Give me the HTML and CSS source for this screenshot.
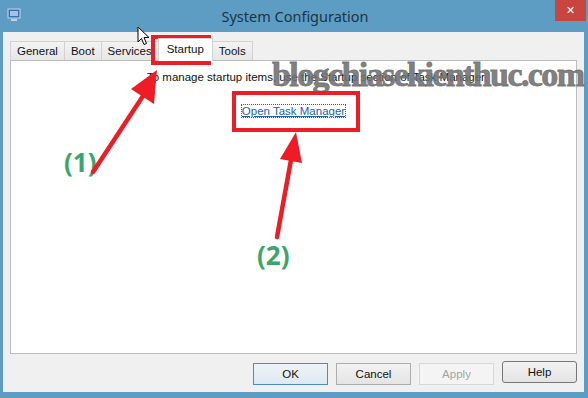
FILE: index.html
```html
<!DOCTYPE html>
<html lang="en">
<head>
    <meta charset="UTF-8">
    <title>System Configuration</title>
    <link rel="stylesheet" href="styles.css">
</head>
<body>

<div class="window">
    <div class="titlebar">
        <svg class="app-icon" width="14" height="14" viewBox="0 0 14 14">
            <rect x="1" y="1" width="12" height="9" fill="#3a6fb0" stroke="#c8d8ea" stroke-width="1"/>
            <rect x="3" y="3" width="8" height="5" fill="#9fc4ea"/>
            <rect x="4" y="11" width="6" height="2" fill="#c8d0d8"/>
        </svg>
        <div class="title">System Configuration</div>
        <div class="close">&#x2715;</div>
    </div>

    <div class="client">
        <div class="tabs">
            <div class="tab">General</div>
            <div class="tab">Boot</div>
            <div class="tab">Services</div>
            <div class="tab active">Startup</div>
            <div class="tab">Tools</div>
        </div>

        <div class="panel">
            <p class="msg">To manage startup items, use the Startup section of Task Manager.</p>
            <div class="link-row"><a href="#" class="link">Open Task Manager</a></div>
        </div>

        <div class="buttons">
            <button class="btn default">OK</button>
            <button class="btn">Cancel</button>
            <button class="btn" disabled>Apply</button>
            <button class="btn help">Help</button>
        </div>
    </div>

    <!-- annotations over the screenshot -->
    <div class="watermark">blogchiasekienthuc.com</div>
    <div class="mark mark-tab"></div>
    <div class="mark mark-link"></div>
    <div class="label label-1">(1)</div>
    <div class="label label-2">(2)</div>
    <svg class="arrows" width="588" height="398" viewBox="0 0 588 398">
        <line x1="93" y1="172" x2="143" y2="96" stroke="#ee1c24" stroke-width="4.5" stroke-linecap="round"/>
        <polygon points="157,70 154,104 131,89" fill="#ee1c24"/>
        <line x1="277" y1="237" x2="291" y2="160" stroke="#ee1c24" stroke-width="4.5" stroke-linecap="round"/>
        <polygon points="296,132 302,163 280,159" fill="#ee1c24"/>
    </svg>
    <svg class="cursor" width="13" height="20" viewBox="0 0 13 20">
        <path d="M1 1 L1 16 L4.5 12.5 L7 18.5 L9.5 17.5 L7 11.5 L12 11.5 Z" fill="#fff" stroke="#000" stroke-width="1"/>
    </svg>
</div>

</body>
</html>
```

FILE: styles.css
```css
body {
    margin: 0;
    padding: 0;
    font-family: 'Liberation Sans', Arial, sans-serif;
}
.window {
    position: relative;
    width: 588px;
    height: 398px;
    background-color: #5d9dc3;
    display: flex;
    flex-direction: column;
    overflow: hidden;
}
.titlebar {
    height: 32px;
    display: flex;
    align-items: flex-start;
}
.app-icon {
    margin: 8px 0 0 7px;
}
.title {
    flex: 1;
    text-align: center;
    font-family: 'Noto Sans', sans-serif;
    font-size: 14.5px;
    color: #1b3446;
    line-height: 32px;
    padding-left: 14px;
}
.close {
    width: 31px;
    height: 21px;
    margin-right: 2px;
    background-color: #c9453f;
    color: #fff;
    font-size: 11px;
    line-height: 21px;
    text-align: center;
}
.client {
    flex: 1;
    margin: 0 4px 6px 3px;
    background-color: #f0f0f0;
    padding: 6px 7px 0 7px;
    display: flex;
    flex-direction: column;
}
.tabs {
    display: flex;
    align-items: flex-end;
    height: 22px;
}
.tab {
    height: 19px;
    line-height: 19px;
    padding: 0 6px;
    font-size: 11.5px;
    color: #111;
    background: linear-gradient(#f3f3f3, #e6e6e6);
    border: 1px solid #d2d2d2;
    border-bottom: none;
    margin-right: -1px;
    box-sizing: border-box;
}
.tab.active {
    height: 23px;
    line-height: 20px;
    background: #fff;
    position: relative;
    z-index: 1;
    margin-bottom: -1px;
    padding: 0 8px;
}
.panel {
    height: 294px;
    background-color: #fff;
    border: 1px solid #bcbcbc;
    box-sizing: border-box;
}
.msg {
    margin: 10px 0 0 136px;
    font-size: 11.5px;
    color: #111;
}
.link-row {
    text-align: center;
    margin-top: 18px;
}
.link {
    font-size: 11.5px;
    color: #1b5fb4;
    text-decoration: underline;
    outline: 1px dotted #555;
}
.buttons {
    display: flex;
    justify-content: flex-end;
    gap: 8px;
    padding: 9px 0 0 0;
}
.btn {
    width: 75px;
    height: 22px;
    font-family: 'Liberation Sans', Arial, sans-serif;
    font-size: 11.5px;
    color: #111;
    background: linear-gradient(#f2f2f2, #e4e4e4);
    border: 1px solid #adadad;
    padding: 0;
}
.btn.default {
    border-color: #4b8cc4;
    background: linear-gradient(#eef3f8, #dfe8f1);
}
.btn:disabled {
    color: #a3a3a3;
    border-color: #d8d8d8;
    background: #f4f4f4;
}
.btn.help {
    border-color: #777;
    border-radius: 3px;
    margin-top: -2px;
}
.watermark {
    position: absolute;
    left: 272px;
    top: 56px;
    font-family: 'Liberation Serif', serif;
    font-weight: bold;
    font-size: 34px;
    letter-spacing: -1.6px;
    color: rgba(112, 112, 112, 0.9);
    -webkit-text-stroke: 0.8px rgba(112, 112, 112, 0.9);
    white-space: nowrap;
}
.mark {
    position: absolute;
    border: 4px solid #ee1c24;
    box-sizing: border-box;
}
.mark-tab {
    left: 151px;
    top: 35px;
    width: 60px;
    height: 30px;
}
.mark-link {
    left: 232px;
    top: 91px;
    width: 128px;
    height: 41px;
}
.label {
    position: absolute;
    font-family: 'Open Sans', sans-serif;
    font-weight: bold;
    font-size: 26px;
    color: #3ba56c;
}
.label-1 {
    left: 64px;
    top: 144px;
}
.label-2 {
    left: 257px;
    top: 237px;
}
.arrows {
    position: absolute;
    left: 0;
    top: 0;
}
.cursor {
    position: absolute;
    left: 137px;
    top: 26px;
}
```
